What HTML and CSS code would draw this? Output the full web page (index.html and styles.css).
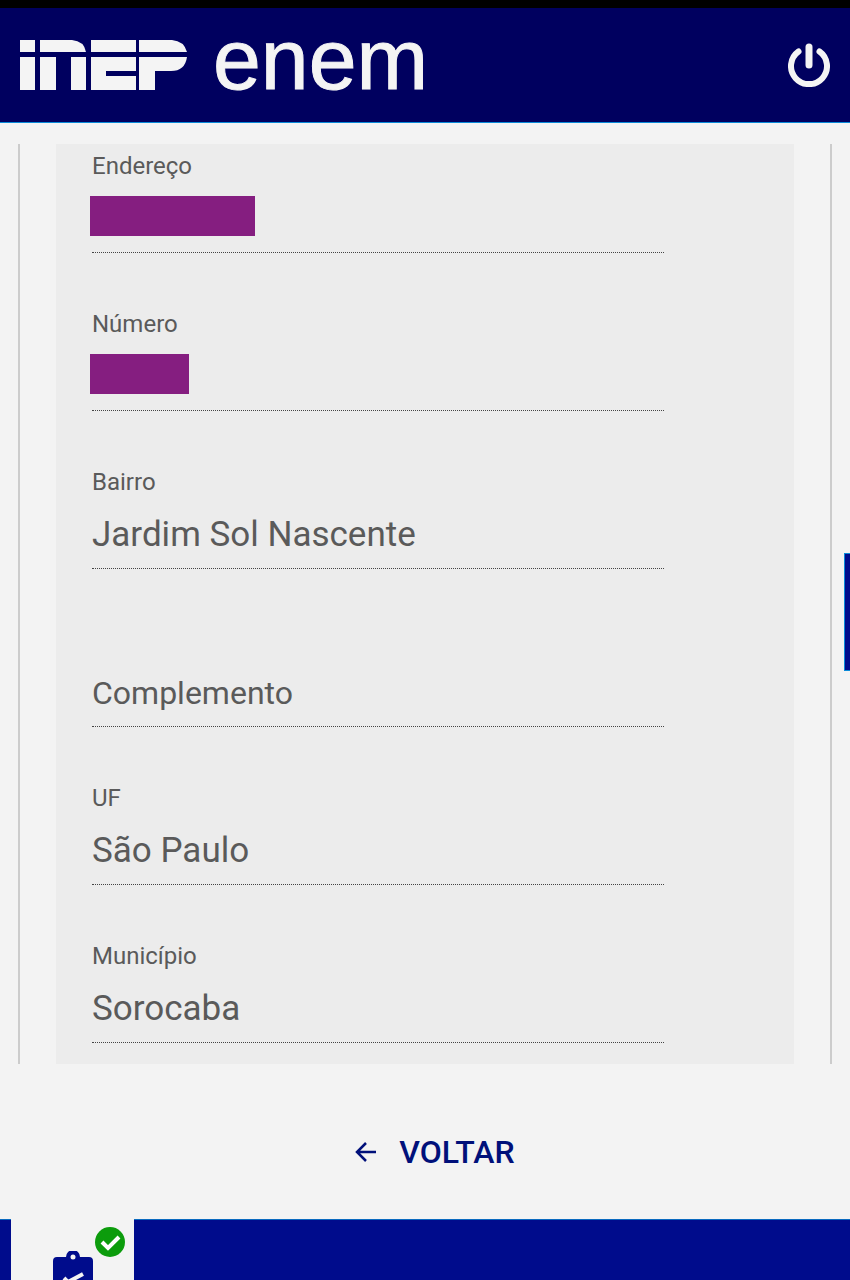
FILE: index.html
```html
<!DOCTYPE html>
<html lang="pt-BR">
<head>
<meta charset="utf-8">
<meta name="viewport" content="width=device-width, initial-scale=1">
<title>inep enem</title>
<link rel="stylesheet" href="styles.css">
</head>
<body>
<header class="topbar">
  <div class="brand">
    <svg class="inep" viewBox="0 0 167 50" role="img" aria-label="inep">
      <g fill="#f4f4f4">
        <rect width="15" height="12"/>
        <rect y="17" width="15" height="33"/>
        <path d="M20 0H52Q64 1 66 12H20z"/>
        <rect x="20" y="17" width="16" height="33"/>
        <rect x="51" y="17" width="15" height="33"/>
        <rect x="71" width="45" height="12"/>
        <rect x="71" y="17" width="15" height="33"/>
        <rect x="86" y="17" width="30" height="14"/>
        <rect x="86" y="36" width="30" height="14"/>
        <path d="M119 0H152Q164 1 167 12H119z"/>
        <path d="M119 17H167Q165 31 151 31H135V50H119z"/>
      </g>
    </svg>
    <span class="enem">enem</span>
  </div>
  <button class="power" type="button" aria-label="Sair">
    <svg viewBox="0 0 42 44" fill="none" stroke="#f4f4f4" stroke-linecap="round">
      <path d="M21 4V22" stroke-width="7"/>
      <path d="M10.500 8.500A18 18 0 1 0 31.500 8.500" stroke-width="6"/>
    </svg>
  </button>
</header>

<main class="content">
  <div class="sheet">
    <form class="card">
      <div class="field">
        <span class="label">Endereço</span>
        <div class="value"><span class="redacted redacted-long"></span></div>
      </div>
      <div class="field">
        <span class="label">Número</span>
        <div class="value"><span class="redacted redacted-short"></span></div>
      </div>
      <div class="field">
        <label class="label" for="bairro">Bairro</label>
        <input class="value" id="bairro" type="text" value="Jardim Sol Nascente" readonly>
      </div>
      <div class="field field-empty">
        <input class="value" id="complemento" type="text" placeholder="Complemento" aria-label="Complemento" readonly>
      </div>
      <div class="field">
        <label class="label" for="uf">UF</label>
        <input class="value" id="uf" type="text" value="São Paulo" readonly>
      </div>
      <div class="field">
        <label class="label" for="municipio">Município</label>
        <input class="value" id="municipio" type="text" value="Sorocaba" readonly>
      </div>
    </form>
  </div>
  <div class="actions">
    <button class="back" type="button">
      <svg viewBox="0 0 22 22" fill="none" stroke="currentColor" stroke-width="2.500"><path d="M11 2L2 11L11 20M2 11H21"/></svg>
      VOLTAR
    </button>
  </div>
</main>

<button class="side-tab" type="button" aria-label="Menu"></button>

<nav class="steps">
  <button class="step" type="button" aria-label="Etapa">
    <svg class="clipboard" viewBox="0 0 40 29">
      <path d="M4 6H13A7 7 0 0 1 27 6H36Q40 6 40 10V29H0V10Q0 6 4 6z" fill="#000c8c"/>
      <circle cx="20" cy="6" r="2.500" fill="#f3f3f3"/>
      <path d="M11 27L15 31L30 23" fill="none" stroke="#f3f3f3" stroke-width="4"/>
    </svg>
    <svg class="done" viewBox="0 0 30 30">
      <circle cx="15" cy="15" r="15" fill="#0c9c0c"/>
      <path d="M7 15L13 21L24 10" fill="none" stroke="#fff" stroke-width="4"/>
    </svg>
  </button>
</nav>
</body>
</html>
```
FILE: styles.css
```css
* { box-sizing: border-box; }

body {
  margin: 0;
  min-height: 100vh;
  display: flex;
  flex-direction: column;
  background: #f3f3f3;
  color: #5a5a5a;
  font-family: Roboto, sans-serif;
}

button {
  margin: 0;
  padding: 0;
  border: 0;
  background: none;
  font: inherit;
}

svg { display: block; }

.topbar {
  display: flex;
  align-items: center;
  justify-content: space-between;
  height: 123px;
  padding: 0 20px;
  border-top: 8px solid #000;
  border-bottom: 1px solid #0a8ad8;
  background: #00005f;
}

.brand {
  display: flex;
  align-items: center;
  gap: 26px;
}

.inep { width: 167px; }

.enem {
  color: #f4f4f4;
  font-family: "Liberation Sans", Arial, sans-serif;
  font-size: 86px;
  line-height: 86px;
  padding-bottom: 12px;
  -webkit-text-stroke: 1px #f4f4f4;
}

.power svg { width: 42px; }

.content {
  flex: 1;
  display: flex;
  flex-direction: column;
  padding-top: 21px;
}

.sheet {
  margin: 0 18px;
  padding: 0 36px;
  border-left: 2px solid #ccc;
  border-right: 2px solid #ccc;
}

.card {
  display: flex;
  flex-direction: column;
  gap: 49px;
  padding: 0 130px 21px 36px;
  background: #ececec;
}

.field {
  display: flex;
  flex-direction: column;
  border-bottom: 1px dotted #444;
  padding-bottom: 4px;
}

.field-empty { padding-top: 42px; }

.label {
  padding-top: 2px;
  font-size: 24px;
  line-height: 40px;
}

.value {
  width: 100%;
  height: 62px;
  margin: 0;
  padding: 2px 0 0;
  border: 0;
  outline: 0;
  background: none;
  color: #5a5a5a;
  font-family: inherit;
  font-size: 35px;
}

.field-empty .value {
  padding-top: 4px;
  font-size: 32px;
}

.value::placeholder {
  color: #5a5a5a;
  opacity: 1;
}

.redacted {
  display: block;
  height: 40px;
  margin: 8px -2px;
  background: #851e80;
}

.redacted-long { width: 165px; }
.redacted-short { width: 99px; }

.actions {
  flex: 1;
  display: flex;
  align-items: center;
  justify-content: center;
  min-height: 155px;
  padding: 20px 0 0 20px;
}

.back {
  display: flex;
  align-items: center;
  gap: 22px;
  color: #00107a;
  font-size: 32px;
  font-weight: 500;
}

.back svg { width: 22px; }

.side-tab {
  position: fixed;
  top: 553px;
  right: 0;
  width: 6px;
  height: 118px;
  border: 1px solid #0a8ad8;
  border-right: 0;
  background: #000c8c;
}

.steps {
  height: 61px;
  padding-left: 11px;
  background: #000c8c;
  border-top: 1px solid #0a6ac0;
}

.step {
  display: flex;
  justify-content: space-between;
  align-items: flex-start;
  width: 123px;
  height: 61px;
  margin-top: -1px;
  padding: 8px 9px 0 42px;
  background: #f3f3f3;
}

.clipboard {
  width: 40px;
  margin-top: 24px;
}

.done { width: 30px; }
```
